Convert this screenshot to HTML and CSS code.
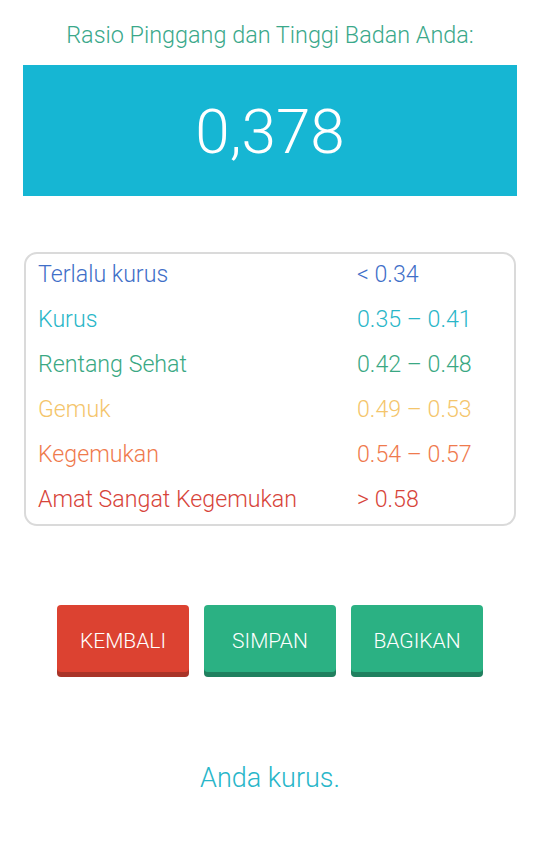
FILE: index.html
```html
<!DOCTYPE html>
<html>
<head>
<meta charset="utf-8">
<link rel="stylesheet" href="styles.css">
</head>
<body>
<div class="page">
  <div class="title">Rasio Pinggang dan Tinggi Badan Anda:</div>
  <div class="result">0,378</div>
  <div class="table">
    <div class="row c1"><span class="name">Terlalu kurus</span><span class="val">&lt; 0.34</span></div>
    <div class="row c2"><span class="name">Kurus</span><span class="val">0.35 – 0.41</span></div>
    <div class="row c3"><span class="name">Rentang Sehat</span><span class="val">0.42 – 0.48</span></div>
    <div class="row c4"><span class="name">Gemuk</span><span class="val">0.49 – 0.53</span></div>
    <div class="row c5"><span class="name">Kegemukan</span><span class="val">0.54 – 0.57</span></div>
    <div class="row c6"><span class="name">Amat Sangat Kegemukan</span><span class="val">&gt; 0.58</span></div>
  </div>
  <div class="buttons">
    <div class="btn red">KEMBALI</div>
    <div class="btn green">SIMPAN</div>
    <div class="btn green">BAGIKAN</div>
  </div>
  <div class="verdict">Anda kurus.</div>
</div>
</body>
</html>
```
FILE: styles.css
```css
html, body {
  margin: 0;
  padding: 0;
  background: #ffffff;
}
body {
  font-family: Roboto, "Noto Sans", sans-serif;
  font-weight: 300;
}
.page {
  width: 540px;
  display: flex;
  flex-direction: column;
  align-items: center;
}
.title {
  margin-top: 20px;
  height: 30px;
  line-height: 30px;
  font-size: 23.4px;
  color: #3aa88a;
}
.result {
  margin-top: 15px;
  width: 494px;
  height: 131px;
  background: #16b6d3;
  color: #ffffff;
  font-size: 62px;
  line-height: 133px;
  text-align: center;
}
.table {
  margin-top: 56px;
  width: 488px;
  border: 2px solid #dadada;
  border-radius: 13px;
}
.row {
  display: flex;
  height: 45px;
  line-height: 41px;
  font-size: 23.2px;
}
.row .name {
  width: 319px;
  padding-left: 12px;
}
.c1 { color: #3f6fc8; }
.c2 { color: #29b6c8; }
.c3 { color: #3aa883; }
.c4 { color: #f4c56b; }
.c5 { color: #ef7a4d; }
.c6 { color: #d7443a; }
.buttons {
  margin-top: 79px;
  display: flex;
  gap: 15px;
}
.btn {
  width: 132px;
  height: 67px;
  border-radius: 4px;
  color: #ffffff;
  font-size: 21px;
  line-height: 73px;
  text-align: center;
}
.red {
  background: #dc4231;
  box-shadow: 0 5px 0 #a93428;
}
.green {
  background: #2bb183;
  box-shadow: 0 5px 0 #20805f;
}
.verdict {
  margin-top: 90px;
  font-size: 27px;
  color: #28b6c9;
}
```
